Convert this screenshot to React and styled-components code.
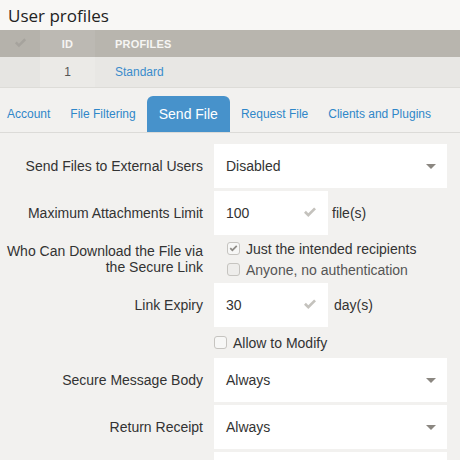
import React from "react";
import styled, { createGlobalStyle } from "styled-components";

const GlobalStyle = createGlobalStyle`
  html, body {
    margin: 0;
    padding: 0;
    background: #f2f1ef;
    font-family: "Liberation Sans", Arial, sans-serif;
    color: #333;
  }
`;

const Page = styled.div`
  width: 460px;
  height: 460px;
  overflow: hidden;
  background: #f2f1ef;
`;

const Header = styled.div`
  height: 30px;
  background: #f8f7f5;
  display: flex;
  align-items: center;
  padding-left: 8px;
`;

const Title = styled.h1`
  margin: 0;
  font-family: "Open Sans", "Noto Sans", sans-serif;
  font-weight: 400;
  font-size: 17px;
  color: #222;
`;

const Table = styled.div`
  display: grid;
  grid-template-columns: 40px 55px 1fr;
  border-bottom: 1px solid #dddcd8;
`;

const HeadCell = styled.div`
  height: 27px;
  display: flex;
  align-items: center;
  justify-content: ${(p) => (p.$left ? "flex-start" : "center")};
  padding-left: ${(p) => (p.$left ? "20px" : "0")};
  background: ${(p) => p.$bg || "#b8b5ae"};
  color: #f6f5f3;
  font-size: 11px;
  font-weight: 700;
  letter-spacing: 0.2px;
`;

const Cell = styled.div`
  height: 30px;
  display: flex;
  align-items: center;
  justify-content: ${(p) => (p.$left ? "flex-start" : "center")};
  padding-left: ${(p) => (p.$left ? "20px" : "0")};
  background: ${(p) => p.$bg || "#e8e7e4"};
  font-size: 12px;
  color: ${(p) => (p.$link ? "#3a8ccc" : "#555")};
`;

const Tabs = styled.div`
  display: flex;
  align-items: flex-end;
  height: 44px;
  margin-left: -3px;
  border-bottom: 1px solid #dcdbd8;
`;

const Tab = styled.div`
  height: 36px;
  display: flex;
  align-items: center;
  padding: 0 ${(p) => (p.$active ? "12px" : "10px")};
  margin: 0 ${(p) => (p.$active ? "1px" : "0")};
  border-radius: 6px 6px 0 0;
  background: ${(p) => (p.$active ? "#4792cb" : "transparent")};
  color: ${(p) => (p.$active ? "#fff" : "#2f87c9")};
  font-size: ${(p) => (p.$active ? "14px" : "12px")};
  white-space: nowrap;
`;

const Form = styled.div`
  display: grid;
  grid-template-columns: 203px 1fr;
  column-gap: 11px;
  row-gap: 3px;
  padding: 11px 13px 0 0;
`;

const Label = styled.div`
  text-align: right;
  align-self: center;
  font-size: 14px;
  line-height: 16px;
  color: #333;
`;

const Select = styled.div`
  height: 44px;
  background: #fff;
  display: flex;
  align-items: center;
  justify-content: space-between;
  padding: 0 11px 0 12px;
  font-size: 14px;
  color: #333;
`;

const Caret = styled.span`
  width: 0;
  height: 0;
  border-left: 5px solid transparent;
  border-right: 5px solid transparent;
  border-top: 5px solid #8b8781;
`;

const InputRow = styled.div`
  display: flex;
  align-items: center;
  gap: 4px;
`;

const Input = styled.div`
  width: 114px;
  height: 44px;
  box-sizing: border-box;
  background: #fff;
  display: flex;
  align-items: center;
  justify-content: space-between;
  padding: 0 11px 0 12px;
  font-size: 14px;
  color: #333;
`;

const Unit = styled.span`
  font-size: 14px;
  color: #333;
  margin-left: ${(p) => p.$offset || "0"};
`;

const CheckGroup = styled.div`
  display: flex;
  flex-direction: column;
  padding-left: 13px;
  height: 42px;
  justify-content: center;
`;

const CheckLine = styled.label`
  display: flex;
  align-items: center;
  gap: 6px;
  height: 21px;
  font-size: 14px;
  color: ${(p) => (p.$muted ? "#555" : "#333")};
`;

const Box = styled.span`
  width: 13px;
  height: 13px;
  box-sizing: border-box;
  border: 1px solid #c6c4c0;
  border-radius: 3px;
  background: ${(p) => (p.$faded ? "#eeedeb" : "#f7f7f6")};
  display: flex;
  align-items: center;
  justify-content: center;
`;

const Spacer = styled.div``;

const ModifyRow = styled.div`
  height: 25px;
  display: flex;
  align-items: center;
`;

const Check = ({ size = 14, color = "#c4c2bd" }) => (
  <svg width={size} height={size * 0.8} viewBox="0 0 14 11">
    <path d="M1 5.6 L2.9 3.7 L5.3 6.1 L11.1 0.3 L13 2.2 L5.3 9.9 Z" fill={color} />
  </svg>
);

const selects = [{ label: "Send Files to External Users", value: "Disabled" }];

export default function App() {
  return (
    <Page>
      <GlobalStyle />
      <Header>
        <Title>User profiles</Title>
      </Header>
      <Table>
        <HeadCell $bg="#b5b2ab">
          <Check size={13} color="#a6a39d" />
        </HeadCell>
        <HeadCell $bg="#bcb9b3">ID</HeadCell>
        <HeadCell $left>PROFILES</HeadCell>
        <Cell $bg="#e6e5e2" />
        <Cell $bg="#ebeae7">1</Cell>
        <Cell $left $link>Standard</Cell>
      </Table>
      <Tabs>
        <Tab>Account</Tab>
        <Tab>File Filtering</Tab>
        <Tab $active>Send File</Tab>
        <Tab>Request File</Tab>
        <Tab>Clients and Plugins</Tab>
      </Tabs>
      <Form>
        {selects.map((o) => (
          <React.Fragment key={o.label}>
            <Label>{o.label}</Label>
            <Select>
              {o.value}
              <Caret />
            </Select>
          </React.Fragment>
        ))}

        <Label>Maximum Attachments Limit</Label>
        <InputRow>
          <Input>
            100
            <Check />
          </Input>
          <Unit>file(s)</Unit>
        </InputRow>

        <Label>
          Who Can Download the File via
          <br />
          the Secure Link
        </Label>
        <CheckGroup>
          <CheckLine>
            <Box>
              <Check size={9} color="#8e8b86" />
            </Box>
            Just the intended recipients
          </CheckLine>
          <CheckLine $muted>
            <Box $faded />
            Anyone, no authentication
          </CheckLine>
        </CheckGroup>

        <Label>Link Expiry</Label>
        <InputRow>
          <Input>
            30
            <Check />
          </Input>
          <Unit $offset="2px">day(s)</Unit>
        </InputRow>

        <Spacer />
        <ModifyRow>
          <CheckLine>
            <Box />
            Allow to Modify
          </CheckLine>
        </ModifyRow>

        <Label>Secure Message Body</Label>
        <Select>
          Always
          <Caret />
        </Select>

        <Label>Return Receipt</Label>
        <Select>
          Always
          <Caret />
        </Select>

        <Spacer />
        <Select />
      </Form>
    </Page>
  );
}
